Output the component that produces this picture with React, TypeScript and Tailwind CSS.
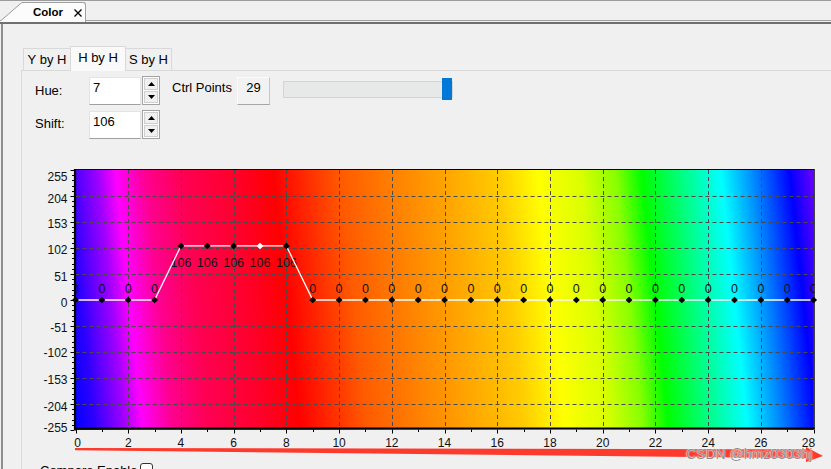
import React from "react";

const X0 = 75.5;
const UX = 26.36;
const X = (u: number) => X0 + u * UX;
const Y = (v: number) => 300 - (v * 130) / 255;
const VALUES = Array.from({ length: 29 }, (_, i) => (i >= 4 && i <= 8 ? 106 : 0));

const STOPS: [number, string][] = [
  [-28, "#0000ff"],
  [-8, "#2c00ff"],
  [2, "#5500ff"],
  [22, "#a000ff"],
  [40, "#ff00ff"],
  [70, "#ff0090"],
  [105, "#ff0055"],
  [160, "#ff002a"],
  [198, "#ff0000"],
  [264, "#ff5a00"],
  [316, "#ff8000"],
  [369, "#ffa500"],
  [422, "#ffcc00"],
  [462, "#ffff00"],
  [505, "#daff00"],
  [540, "#88ff00"],
  [566, "#00ff00"],
  [605, "#00ff80"],
  [645, "#00ffff"],
  [680, "#0080ff"],
  [714, "#0000ff"],
  [738, "#6a00ff"],
];
const GX1 = X0 - 28;
const GW = 766;

const Y_LABELS: [number, number][] = [
  [255, 177],
  [204, 199],
  [153, 224],
  [102, 250],
  [51, 276.5],
  [0, 302.5],
  [-51, 328],
  [-102, 353],
  [-153, 380],
  [-204, 406.5],
  [-255, 428],
];

function Chart() {
  const right = X(28);
  const top = 170;
  const bottom = 429;
  const minorY: number[] = [];
  for (let v = -255; v <= 255.01; v += 10.2) minorY.push(v);
  const linePts = VALUES.map((v, i) => `${X(i)},${Y(v)}`).join(" ");
  return (
    <svg width={809} height={311} viewBox="22 139 809 311" className="block">
      <defs>
        <linearGradient
          id="hueGrad"
          gradientUnits="userSpaceOnUse"
          x1={GX1}
          y1={0}
          x2={GX1 + GW}
          y2={0}
          gradientTransform="translate(0,170) skewX(6) translate(0,-170)"
        >
          {STOPS.map(([p, c]) => (
            <stop key={p} offset={(p + 28) / GW} stopColor={c} />
          ))}
        </linearGradient>
        <clipPath id="plotClip">
          <rect x={X0} y={top - 1} width={right - X0 + 1} height={bottom - top + 2} />
        </clipPath>
      </defs>
      <rect x={X0} y={top} width={right - X0} height={bottom - top + 1} fill="url(#hueGrad)" />
      {/* grid */}
      <g stroke="#4a4a4a" strokeWidth={1} strokeDasharray="4 3">
        {[204, 153, 102, 51, -51, -102, -153, -204].map((v) => (
          <line key={v} x1={X0} x2={right} y1={Math.round(Y(v)) + 0.5} y2={Math.round(Y(v)) + 0.5} />
        ))}
        {[2, 4, 6, 8, 10, 12, 14, 16, 18, 20, 22, 24, 26].map((u) => (
          <line key={u} x1={Math.round(X(u)) + 0.5} x2={Math.round(X(u)) + 0.5} y1={top} y2={bottom} />
        ))}
      </g>
      {/* value labels */}
      <g fontSize={12.5} fill="#141414" textAnchor="middle" clipPath="url(#plotClip)">
        {VALUES.map((v, i) => (
          <text key={i} x={X(i)} y={v === 0 ? 293 : 267}>
            {v}
          </text>
        ))}
      </g>
      {/* data line */}
      <polyline points={linePts} fill="none" stroke="#ffffff" strokeWidth={1.3} />
      {/* axes + border */}
      <line x1={X0 - 1} x2={right + 0.5} y1={169.5} y2={169.5} stroke="#000" strokeWidth={1} />
      <line x1={right + 0.5} x2={right + 0.5} y1={169} y2={bottom} stroke="#000" strokeWidth={1.3} />
      <line x1={75} x2={75} y1={169} y2={bottom + 1.5} stroke="#000" strokeWidth={2.2} />
      <line x1={74} x2={right + 1} y1={428.5} y2={428.5} stroke="#000" strokeWidth={2.2} />
      {/* ticks */}
      <g stroke="#000" strokeWidth={1}>
        {minorY.map((v, i) => (
          <line key={i} x1={72} x2={74} y1={Math.round(Y(v)) + 0.5} y2={Math.round(Y(v)) + 0.5} />
        ))}
        {Y_LABELS.map(([v]) => (
          <line key={v} x1={70.5} x2={74} y1={Math.round(Y(v)) + 0.5} y2={Math.round(Y(v)) + 0.5} />
        ))}
        {VALUES.map((_, u) => (
          <line
            key={u}
            x1={Math.round(X(u)) + 0.5}
            x2={Math.round(X(u)) + 0.5}
            y1={429.5}
            y2={u % 2 === 0 ? 433.5 : 432}
          />
        ))}
      </g>
      {/* points */}
      {VALUES.map((v, i) => {
        const cx = X(i);
        const cy = Y(v);
        return (
          <polygon
            key={i}
            points={`${cx},${cy - 3.3} ${cx + 3.5},${cy} ${cx},${cy + 3.3} ${cx - 3.5},${cy}`}
            fill={i === 7 ? "#ffffff" : "#000000"}
          />
        );
      })}
      {/* y labels */}
      <g fontSize={12} fill="#111" textAnchor="end">
        {Y_LABELS.map(([v, c]) => (
          <text key={v} x={67.5} y={c + 4.3}>
            {v}
          </text>
        ))}
      </g>
      {/* x labels */}
      <g fontSize={12} fill="#111" textAnchor="middle">
        {[0, 2, 4, 6, 8, 10, 12, 14, 16, 18, 20, 22, 24, 26, 28].map((u) => (
          <text key={u} x={u === 0 ? 77.5 : u === 28 ? 808.5 : X(u)} y={446.5}>
            {u}
          </text>
        ))}
      </g>
    </svg>
  );
}

function Spinner() {
  return (
    <div className="w-[18px] h-[29px] border border-[#a3a3a3] bg-white flex flex-col p-[1px] gap-[1px]">
      <div className="flex-1 border border-[#cfcfcf] bg-[#f0f0f0] flex items-center justify-center">
        <svg width="7" height="4" viewBox="0 0 7 4">
          <polygon points="0,4 3.5,0 7,4" fill="#000" />
        </svg>
      </div>
      <div className="flex-1 border border-[#cfcfcf] bg-[#f0f0f0] flex items-center justify-center">
        <svg width="7" height="4" viewBox="0 0 7 4">
          <polygon points="0,0 3.5,4 7,0" fill="#000" />
        </svg>
      </div>
    </div>
  );
}

function NumInput({ value }: { value: string }) {
  return (
    <div className="mt-[1px] w-[52px] h-[28px] bg-white border border-[#e3e3e3] border-b-[#a0a0a0] pl-[3px] pt-[2px] text-[13px] leading-[16px] text-black">
      {value}
    </div>
  );
}

export default function App() {
  return (
    <div className="relative w-[831px] h-[469px] overflow-hidden bg-[#f0f0f0] flex flex-col font-['Liberation_Sans',Arial,sans-serif] text-black">
      {/* document tab strip */}
      <div className="h-[22px] border-t border-[#9c9c9c] flex items-start shrink-0">
        <div className="w-[1px] h-[20px] border-b border-[#a0a0a0]" />
        <svg width="21" height="20" viewBox="0 0 21 20" className="mt-[1px] block shrink-0">
          <polygon points="0,18.5 20.5,0.5 21,0.5 21,20 0,20" fill="#fcfcfc" />
          <line x1="0" y1="18.5" x2="20.8" y2="0.5" stroke="#9a9a9a" strokeWidth="1" />
        </svg>
        <div className="mt-[1px] w-[64px] h-[20px] bg-[#fcfcfc] border-t border-r border-[#a0a0a0] rounded-tr-[3px] flex items-center pl-[11px] pb-[1px]">
          <span className="text-[11.5px] leading-[14px] font-bold">Color</span>
          <svg width="8" height="8" viewBox="0 0 8 8" className="ml-[11px] mt-[1px]">
            <path d="M0.5 0.5 L7.5 7.5 M7.5 0.5 L0.5 7.5" stroke="#000" strokeWidth="1.3" />
          </svg>
        </div>
        <div className="flex-1 h-[20px] border-b border-[#a0a0a0]" />
      </div>
      <div className="h-[2px] bg-[#6f6f6f] shrink-0" />
      {/* body */}
      <div className="flex-1 ml-[1px] border-l-2 border-[#8e8e8e] pl-[18px] pt-[22px] flex flex-col min-h-0">
        {/* inner tabs */}
        <div className="h-[24px] flex items-end pl-[2px] shrink-0 text-[13px] leading-[16px]">
          <div className="w-[47px] h-[22px] border-l border-t border-[#d9d9d9] bg-[#f0f0f0] flex items-center justify-center pt-[1px]">
            Y by H
          </div>
          <div className="relative z-10 w-[56px] h-[25px] -mb-[1px] border-l border-t border-r border-[#d9d9d9] bg-[#fafafa] flex items-start justify-center pt-[3px]">
            H by H
          </div>
          <div className="w-[46px] h-[22px] border-t border-r border-[#d9d9d9] bg-[#f0f0f0] flex items-center justify-center pt-[1px]">
            S by H
          </div>
        </div>
        {/* panel */}
        <div className="flex-1 border-l border-t border-[#d9d9d9] flex flex-col">
          <div className="pl-[13px] pt-[5px] flex flex-col gap-[5px] text-[13px] leading-[16px]">
            <div className="h-[29px] flex items-start">
              <div className="w-[54px] mt-[7px]">Hue:</div>
              <NumInput value="7" />
              <div className="ml-[1px]">
                <Spinner />
              </div>
              <div className="w-[65px] ml-[12px] mt-[4px] whitespace-nowrap">Ctrl Points</div>
              <div className="mt-[1px] w-[33px] h-[28px] bg-[#f2f2f2] border border-[#fbfbfb] border-r-[#c4c4c4] border-b-[#a6a6a6] text-center pt-[2px]">
                29
              </div>
              <div className="relative ml-[13px] w-[170px] h-[29px]">
                <div className="mt-[5px] h-[17px] bg-[#e7e9e9] border border-[#d4d4d4]" />
                <div className="absolute left-[159px] top-[2px] w-[10px] h-[22px] bg-[#0078d7]" />
              </div>
            </div>
            <div className="h-[29px] flex items-start">
              <div className="w-[54px] mt-[6px]">Shift:</div>
              <NumInput value="106" />
              <div className="ml-[1px]">
                <Spinner />
              </div>
            </div>
          </div>
          <Chart />
          <div className="mt-[13px] pl-[18px] flex items-start text-[13px] leading-[16px]">
            <span className="w-[57px]">Compare</span>
            <span>Enable</span>
            <div className="ml-[3px] mt-[0px] w-[13px] h-[13px] border border-[#333] rounded-[3px] bg-white" />
          </div>
        </div>
      </div>
      {/* annotation overlay: red arrow + watermark */}
      <svg
        width="831"
        height="30"
        viewBox="0 440 831 30"
        className="absolute left-0 top-[440px] pointer-events-none"
      >
        <polygon
          points="75,448 806,449.3 806,447 823,456 806,462 806,458.3 75,450.3"
          fill="#ff2a1c"
          opacity="0.92"
        />
      </svg>
      <div className="absolute left-[686px] top-[446px] text-[14px] leading-[16px] text-[#7f7f7f]/90 [text-shadow:0_0_2px_#ffffff,0_0_1px_#ffffff] whitespace-nowrap">
        CSDN @hmz0303hj
      </div>
    </div>
  );
}
